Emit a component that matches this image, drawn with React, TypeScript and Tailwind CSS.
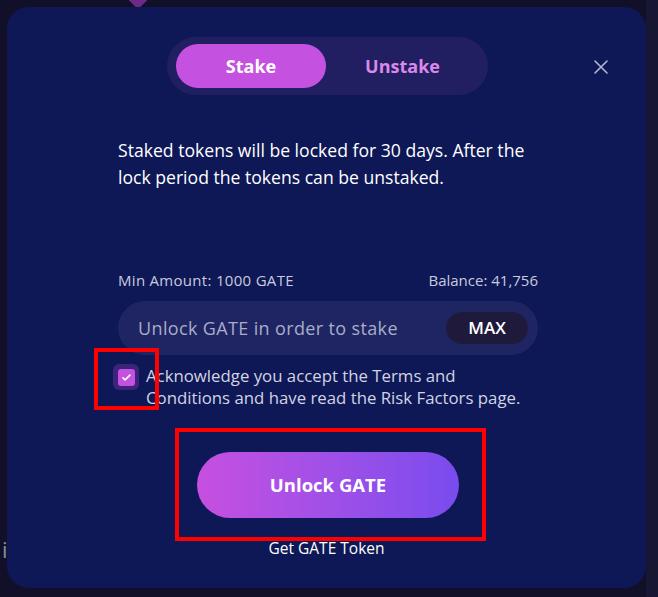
import { useState } from 'react';

const font = { fontFamily: '"Open Sans", "Liberation Sans", sans-serif' };

const CheckIcon = () => (
	<svg viewBox="0 0 16 16" className="size-[11px]">
		<path d="M3 8.5l3 3 7-7" fill="none" stroke="#fff" strokeWidth="2.4" strokeLinecap="round" strokeLinejoin="round" />
	</svg>
);

const StakeModal = () => {
	const [tab, setTab] = useState<'stake' | 'unstake'>('stake');
	const [agreed, setAgreed] = useState(true);

	return (
		<div className="relative ml-[7px] mt-[7px] h-[581px] w-[639px] rounded-[22px] bg-[#0e1856] pt-[30px]">
			<button className="absolute right-[37px] top-[52px] text-[#b3b6cc]">
				<svg viewBox="0 0 16 16" className="size-[16px]">
					<path d="M2 2l12 12M14 2L2 14" stroke="currentColor" strokeWidth="1.6" strokeLinecap="round" />
				</svg>
			</button>

			<div className="ml-[160px] flex h-[58px] w-[321px] items-center rounded-full bg-[#221e62] px-[9px]">
				<button
					onClick={() => setTab('stake')}
					className={
						'h-[44px] w-[150px] rounded-full text-[18px] font-bold ' +
						(tab === 'stake' ? 'bg-[#c551e0] text-white' : 'text-[#d88ae8]')
					}>
					Stake
				</button>
				<button
					onClick={() => setTab('unstake')}
					className={
						'h-[44px] flex-1 rounded-full text-[18px] font-bold ' +
						(tab === 'unstake' ? 'bg-[#c551e0] text-white' : 'text-[#d88ae8]')
					}>
					Unstake
				</button>
			</div>

			<div className="ml-[111px] w-[420px]">
				<p className="mt-[42px] text-[17.6px] font-medium leading-[27px] text-white">
					Staked tokens will be locked for 30 days. After the lock period the tokens can be unstaked.
				</p>

				<div className="mt-[80px] flex justify-between text-[15px] leading-[18px] text-[#c9cbdc]">
					<span className="tracking-[0.02em]">Min Amount: 1000 GATE</span>
					<span>Balance: 41,756</span>
				</div>

				<div className="mt-[12px] flex h-[54px] items-center justify-between rounded-full bg-[#1f2563] pl-[20px] pr-[10px]">
					<span className="text-[18px] tracking-[0.02em] text-[#a9acc8]">Unlock GATE in order to stake</span>
					<button className="h-[32px] w-[82px] rounded-full bg-[#1f1a3c] text-[17px] font-semibold text-white">MAX</button>
				</div>

				<div className="relative mt-[10px] flex gap-[7px]">
					<button
						onClick={() => setAgreed(v => !v)}
						className="-ml-[5px] mt-[-1px] flex size-[26px] shrink-0 items-center justify-center rounded-[6px] bg-[#3b2479]">
						<span className={'flex size-[17px] items-center justify-center rounded-[3px] ' + (agreed ? 'bg-[#c551e0]' : '')}>
							{agreed && <CheckIcon />}
						</span>
					</button>
					<p className="text-[16.8px] leading-[22px] text-[#d2d4e2]">
						Acknowledge you accept the Terms and Conditions and have read the Risk Factors page.
					</p>
					<div className="pointer-events-none absolute left-[-24px] top-[-17px] h-[62px] w-[65px] border-4 border-[#ff0000]" />
				</div>
			</div>

			<div className="ml-[168px] mt-[19px] flex h-[113px] w-[311px] items-center border-4 border-[#ff0000] pl-[18px]">
				<button className="h-[66px] w-[262px] rounded-full bg-linear-to-r from-[#c64fe0] to-[#7a4bee] text-[18.5px] font-bold text-white">
					Unlock GATE
				</button>
			</div>

			<p className="mt-[-3px] text-center text-[15.5px] font-medium leading-[20px] text-white">Get GATE Token</p>
		</div>
	);
};

export default function App() {
	return (
		<div className="relative h-[597px] w-[658px] overflow-hidden bg-[#121029]" style={font}>
			<div className="absolute left-[125px] top-[-22px] size-[26px] rotate-45 rounded-[4px] bg-[#6a2a86]" />
			<div className="absolute left-[2px] top-[533px] text-[22px] text-[#8c8ca0]">i</div>
			<div className="absolute right-0 top-0 h-full w-[12px] bg-[#181733]" />
			<div className="relative">
				<StakeModal />
			</div>
		</div>
	);
}
